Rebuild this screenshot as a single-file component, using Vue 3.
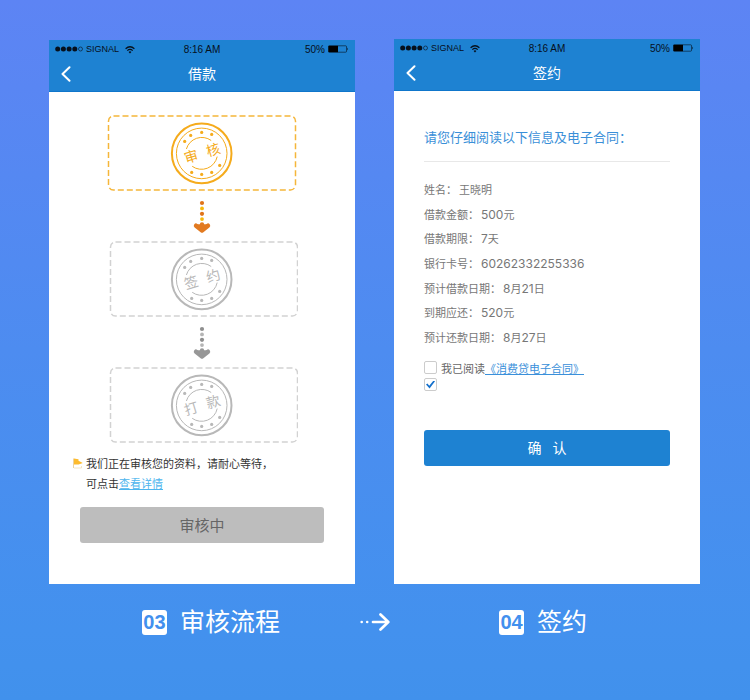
<script setup>
import { ref } from 'vue'

const screens = [
  { id: 'review', title: '借款' },
  { id: 'sign', title: '签约' }
]

const steps = [
  { label: ['审', '核'], active: true },
  { label: ['签', '约'], active: false },
  { label: ['打', '款'], active: false }
]

const stampDots = [
  [-17, -12], [-11, -18], [0, -21], [10, -19],
  [-10, 19], [0, 21], [10, 19], [18, 12]
]

const details = [
  { name: '姓名', value: '王晓明' },
  { name: '借款金额', number: '500', value: '元' },
  { name: '借款期限', number: '7', value: '天' },
  { name: '银行卡号', number: '60262332255336' },
  { name: '预计借款日期', parts: ['8', '月', '21', '日'] },
  { name: '到期应还', number: '520', value: '元' },
  { name: '预计还款日期', parts: ['8', '月', '27', '日'] }
]

const pieces = (d) => d.parts || [d.number, d.value].filter(Boolean)
const isNumber = (s) => /^\d+$/.test(s)

// Full-width punctuation
const comma = '\uff0c'
const colon = '\uff1a'

const agreed = ref(false)
const confirmed = ref(true)
</script>

<template>
  <main class="page">
    <div class="phones">
      <section v-for="screen in screens" :key="screen.id" class="phone">
        <header class="header">
          <div class="status">
            <div class="carrier">
              <svg width="28" height="6" viewBox="0 0 28 6" aria-hidden="true">
                <circle v-for="n in 4" :key="n" :cx="n * 5.7 - 3" cy="3" r="2.5" fill="#06101c" />
                <circle cx="25.5" cy="3" r="2" fill="none" stroke="#06101c" stroke-width=".6" />
              </svg>
              <span class="signal">SIGNAL</span>
              <svg class="wifi" width="10" height="9" viewBox="0 0 10 9" fill="none" stroke="#06101c" aria-hidden="true">
                <path d="M.6 3.8Q5-.3 9.4 3.8" stroke-width="1.2" />
                <path d="M2.3 5.6Q5 3.1 7.7 5.6" stroke-width="1.2" />
                <path d="M3.6 6.9Q5 5.8 6.4 6.9L5 8.5Z" fill="#06101c" stroke="none" />
              </svg>
            </div>
            <span>8:16 AM</span>
            <div class="power">
              <span>50%</span>
              <svg width="21" height="8" viewBox="0 0 21 8" aria-hidden="true">
                <rect x=".5" y=".8" width="18" height="6.4" rx=".8" fill="none" stroke="#06101c" stroke-width=".6" />
                <rect x=".5" y=".8" width="9.5" height="6.4" fill="#000" />
                <path d="M19.3 2.6Q20.8 4 19.3 5.4Z" fill="#06101c" />
              </svg>
            </div>
          </div>
          <div class="nav">
            <button class="back" type="button" aria-label="返回">
              <svg width="10" height="16" viewBox="0 0 10 16" fill="none" stroke="#fff" stroke-width="2" stroke-linecap="round" stroke-linejoin="round">
                <path d="M8.5 1.2L1.5 8l7 6.8" />
              </svg>
            </button>
            <h1>{{ screen.title }}</h1>
          </div>
        </header>

        <div v-if="screen.id === 'review'" class="review">
          <div class="steps">
            <template v-for="(step, i) in steps" :key="i">
              <svg v-if="i > 0" class="connector" :class="{ active: i === 1 }" width="24" height="50" viewBox="0 0 24 50" aria-hidden="true">
                <circle class="dark" cx="12" cy="12" r="2.1" />
                <circle class="light" cx="12" cy="17.4" r="1.9" />
                <circle class="dark" cx="12" cy="22.8" r="2.1" />
                <circle class="light" cx="12" cy="28.1" r="1.9" />
                <path class="head" d="M6 34.7L12 39.5l6-4.8M12 33.5V39M8 35.5h8" />
              </svg>
              <svg class="step" :class="{ active: step.active }" width="192" height="76" viewBox="0 0 192 76">
                <rect class="frame" :x="step.active ? 2.5 : 4.5" y="1" width="187" height="74" rx="5" />
                <g transform="translate(95.7 38.4)">
                  <circle class="ring outer" r="29.8" />
                  <circle class="ring" r="25.3" />
                  <path class="ring" d="M-15.3 -4.4A16 16 0 0 1 9.5-12.9M-9.5 12.9A16 16 0 0 0 15.5 3.2" />
                  <circle v-for="(dot, n) in stampDots" :key="n" class="dot" :cx="dot[0]" :cy="dot[1]" r="1.6" />
                  <g transform="rotate(-17)" class="stamp-text">
                    <text x="-11" y="5">{{ step.label[0] }}</text>
                    <text x="12" y="5">{{ step.label[1] }}</text>
                  </g>
                </g>
              </svg>
            </template>
          </div>
          <div class="message">
            <svg width="10" height="11" viewBox="0 0 10 11" aria-hidden="true">
              <path d="M.4.5V10" stroke="#e5c27a" stroke-width=".8" />
              <path d="M1 .5L5.5 1.2V2.8L9.8 5 5.6 6.4H1Z" fill="#fdbb2d" />
              <path d="M1 10H8.5V8" fill="none" stroke="#f2dfb5" stroke-width=".8" />
            </svg>
            <p>我们正在审核您的资料{{ comma }}请耐心等待{{ comma }}<br />可点击<a href="#details">查看详情</a></p>
          </div>
          <button class="button pending" type="button">审核中</button>
        </div>

        <div v-else class="sign">
          <h2>请您仔细阅读以下信息及电子合同{{ colon }}</h2>
          <dl class="details">
            <div v-for="detail in details" :key="detail.name">
              <dt>{{ detail.name }}{{ colon }}</dt>
              <dd><span v-for="(piece, n) in pieces(detail)" :key="n" :class="{ number: isNumber(piece) }">{{ piece }}</span></dd>
            </div>
          </dl>
          <div class="agreements">
            <label class="agreement">
              <input v-model="agreed" type="checkbox" />
              <span>我已阅读<a href="#contract">《消费贷电子合同》</a></span>
            </label>
            <label class="agreement">
              <input v-model="confirmed" type="checkbox" aria-label="确认" />
            </label>
          </div>
          <button class="button confirm" type="button"><span>确</span><span>认</span></button>
        </div>
      </section>
    </div>

    <footer class="captions">
      <div class="caption first"><span class="badge">03</span><span>审核流程</span></div>
      <svg width="30" height="18" viewBox="0 0 30 18" fill="none" stroke="#fff" aria-hidden="true">
        <circle cx="1.7" cy="9" r="1.3" fill="#fff" stroke="none" />
        <circle cx="7.2" cy="9" r="1.3" fill="#fff" stroke="none" />
        <path d="M13 9H28M20.5 1.5L28.3 9l-7.8 7.5" stroke-width="2.7" stroke-linecap="round" stroke-linejoin="round" />
      </svg>
      <div class="caption second"><span class="badge">04</span><span>签约</span></div>
    </footer>
  </main>
</template>

<style>
body {
  margin: 0;
}
</style>

<style scoped>
.page {
  box-sizing: border-box;
  min-height: 100vh;
  padding-top: 39px;
  background: linear-gradient(#5d84f4, #4d8cf0 50%, #4391ee 90%, #4191ec);
  font-family: "Liberation Sans", "Noto Sans CJK SC", sans-serif;
}

h1,
h2,
p,
dl,
dd {
  margin: 0;
  font-weight: 400;
}

.phones {
  display: grid;
  grid-template-columns: 1fr 1fr;
  column-gap: 39px;
  align-items: end;
  padding: 0 50px 0 49px;
}

.phone {
  background: #fff;
}

.header {
  background: #1e82d2;
  border-bottom: 1px solid #0f76cb;
}

.status {
  display: grid;
  grid-template-columns: 1fr auto 1fr;
  align-items: center;
  height: 18px;
  padding: 0 6px;
  color: #06101c;
  font-size: 10px;
}

.carrier,
.power {
  display: flex;
  align-items: center;
  gap: 3px;
}

.signal {
  font-size: 9px;
}

.wifi {
  margin-left: 3px;
}

.power {
  justify-content: flex-end;
}

.nav {
  box-sizing: border-box;
  display: grid;
  grid-template-columns: 1fr auto 1fr;
  align-items: center;
  height: 33px;
  padding: 0 12px 2px;
}

.nav h1 {
  color: #fff;
  font-size: 14px;
  line-height: 20px;
}

.back {
  justify-self: start;
  display: flex;
  padding: 0;
  border: 0;
  background: none;
}

.review {
  padding: 23px 31px 41px;
}

.steps {
  display: flex;
  flex-direction: column;
  align-items: center;
}

.step {
  --ink: #b8b8b8;
  --frame: #d2d2d2;
  fill: none;
  stroke: var(--ink);
}

.step.active {
  --ink: #f5ab1c;
  --frame: #f5b63a;
}

.frame {
  stroke: var(--frame);
  stroke-width: 1.5;
  stroke-dasharray: 6 3;
}

.ring {
  stroke-width: 1;
}

.ring.outer {
  stroke-width: 2;
}

.dot {
  fill: var(--ink);
  stroke: none;
}

.stamp-text {
  fill: var(--ink);
  stroke: none;
  font-size: 14px;
  text-anchor: middle;
}

.connector {
  --dark: #8e8e8e;
  --light: #b5b5b5;
  --head: #979797;
}

.connector.active {
  --dark: #e07318;
  --light: #f6b90d;
  --head: #e27a20;
}

.connector .dark {
  fill: var(--dark);
}

.connector .light {
  fill: var(--light);
}

.connector .head {
  fill: var(--head);
  stroke: var(--head);
  stroke-width: 4.4;
  stroke-linecap: round;
  stroke-linejoin: round;
}

.message {
  display: flex;
  gap: 3px;
  margin: 11px -7px 0;
  color: #333;
  font-size: 11px;
  line-height: 20px;
}

.message svg {
  flex: none;
  margin-top: 4px;
}

.message a {
  color: #4db5ee;
}

.button {
  display: flex;
  justify-content: center;
  align-items: center;
  width: 100%;
  height: 36px;
  padding: 0 0 2px;
  border: 0;
  border-radius: 3px;
  font-family: inherit;
}

.pending {
  margin-top: 13px;
  background: #bdbdbd;
  color: #666;
  font-size: 15px;
}

.sign {
  padding: 37px 30px 118px;
}

.sign h2 {
  padding-bottom: 13px;
  border-bottom: 1px solid #e8e8e8;
  color: #3a8fd8;
  font-size: 13px;
  line-height: 20px;
}

.details {
  display: grid;
  grid-auto-rows: 1fr;
  min-height: 172px;
  margin-top: 16px;
  color: #777;
  font-size: 11px;
}

.details div {
  display: flex;
  align-items: center;
  line-height: 20px;
}

.details dd {
  padding-left: 2px;
}

.number {
  font-family: Inter, sans-serif;
  font-size: 12px;
}

.agreements {
  margin-top: 9px;
}

.agreement {
  display: flex;
  align-items: center;
  gap: 4px;
  height: 17px;
  color: #666;
  font-size: 11px;
}

.agreement a {
  color: #3a90da;
}

.agreement input {
  display: grid;
  place-items: center;
  width: 13px;
  height: 13px;
  margin: 0;
  border: 1px solid #ccc;
  border-radius: 2px;
  background: #fff;
  appearance: none;
}

.agreement input:checked::after {
  content: "";
  width: 9px;
  height: 8px;
  background: #1470cc;
  clip-path: polygon(0 50%, 16% 38%, 36% 66%, 84% 0, 100% 10%, 40% 100%);
}

.confirm {
  gap: 11px;
  margin-top: 37px;
  background: #1e82d2;
  color: #fff;
  font-size: 14px;
}

.captions {
  display: grid;
  grid-template-columns: 1fr auto 1fr;
  align-items: center;
  padding: 20px 0;
  color: #fff;
  font-size: 25px;
  line-height: 36px;
}

.caption {
  display: flex;
  align-items: center;
  gap: 13px;
}

.first {
  justify-content: flex-end;
  padding-right: 80px;
}

.second {
  padding-left: 109px;
}

.badge {
  width: 25px;
  height: 25px;
  border-radius: 3px;
  background: #fff;
  color: #4290ee;
  font-size: 20px;
  font-weight: 700;
  line-height: 25px;
  text-align: center;
}
</style>
